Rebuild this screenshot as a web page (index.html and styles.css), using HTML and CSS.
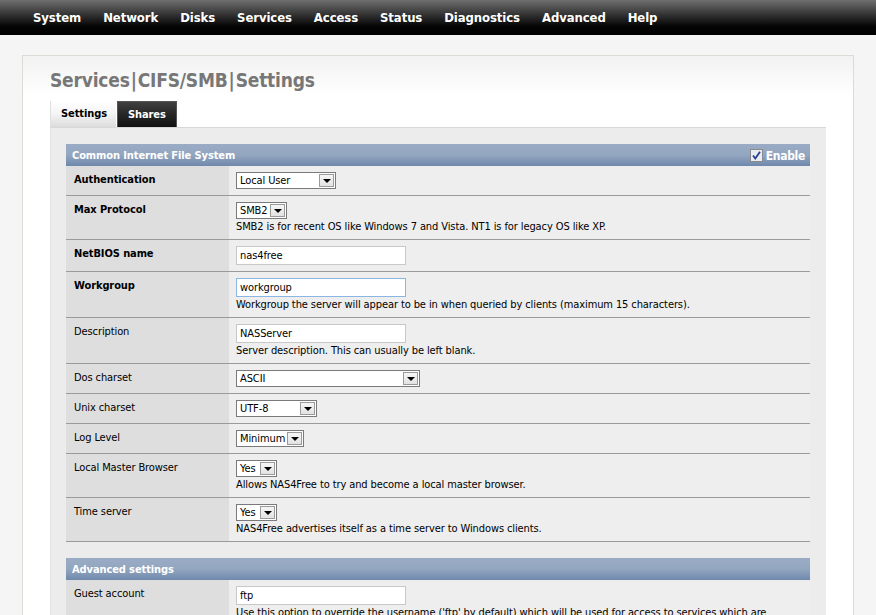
FILE: index.html
```html
<!DOCTYPE html>
<html>
<head>
<meta charset="utf-8">
<link rel="stylesheet" href="styles.css">
</head>
<body>
<div class="nav">
  <a>System</a><a>Network</a><a>Disks</a><a>Services</a><a>Access</a><a>Status</a><a>Diagnostics</a><a>Advanced</a><a>Help</a>
</div>
<div class="page">
  <h1 class="title">Services<span class="sep">|</span>CIFS/SMB<span class="sep">|</span>Settings</h1>
  <div class="tabs">
    <span class="tab active">Settings</span><span class="tab dark">Shares</span>
  </div>
  <div class="panel">
    <table class="form">
      <tr class="head">
        <td colspan="2"><div class="headrow"><span>Common Internet File System</span><span class="enable"><svg width="13" height="13" viewBox="0 0 13 13"><rect x="0.5" y="0.5" width="12" height="12" fill="#e8ecf3" stroke="#8a8a8a"/><path d="M3 6.5 L5.3 9.5 L10 2.8" fill="none" stroke="#2a3f8f" stroke-width="1.8"/></svg>Enable</span></div></td>
      </tr>
      <tr>
        <td class="lbl b">Authentication</td>
        <td class="val"><span class="sel w100"><span class="txt">Local User</span><span class="arr"></span></span></td>
      </tr>
      <tr>
        <td class="lbl b">Max Protocol</td>
        <td class="val"><span class="sel w51"><span class="txt">SMB2</span><span class="arr"></span></span><div class="desc">SMB2 is for recent OS like Windows 7 and Vista. NT1 is for legacy OS like XP.</div></td>
      </tr>
      <tr>
        <td class="lbl b">NetBIOS name</td>
        <td class="val"><span class="inp">nas4free</span></td>
      </tr>
      <tr>
        <td class="lbl b">Workgroup</td>
        <td class="val"><span class="inp focus">workgroup</span><div class="desc">Workgroup the server will appear to be in when queried by clients (maximum 15 characters).</div></td>
      </tr>
      <tr>
        <td class="lbl">Description</td>
        <td class="val"><span class="inp">NASServer</span><div class="desc">Server description. This can usually be left blank.</div></td>
      </tr>
      <tr>
        <td class="lbl">Dos charset</td>
        <td class="val"><span class="sel w184"><span class="txt">ASCII</span><span class="arr"></span></span></td>
      </tr>
      <tr>
        <td class="lbl">Unix charset</td>
        <td class="val"><span class="sel w81"><span class="txt">UTF-8</span><span class="arr"></span></span></td>
      </tr>
      <tr>
        <td class="lbl">Log Level</td>
        <td class="val"><span class="sel w68"><span class="txt">Minimum</span><span class="arr"></span></span></td>
      </tr>
      <tr>
        <td class="lbl">Local Master Browser</td>
        <td class="val"><span class="sel w41"><span class="txt">Yes</span><span class="arr"></span></span><div class="desc">Allows NAS4Free to try and become a local master browser.</div></td>
      </tr>
      <tr>
        <td class="lbl">Time server</td>
        <td class="val"><span class="sel w41"><span class="txt">Yes</span><span class="arr"></span></span><div class="desc">NAS4Free advertises itself as a time server to Windows clients.</div></td>
      </tr>
      <tr class="spacer"><td colspan="2"></td></tr>
      <tr class="head">
        <td colspan="2"><div class="headrow"><span>Advanced settings</span></div></td>
      </tr>
      <tr>
        <td class="lbl">Guest account</td>
        <td class="val"><span class="inp">ftp</span><div class="desc">Use this option to override the username ('ftp' by default) which will be used for access to services which are specified as guest ok or whose users are mapped to guest.</div></td>
      </tr>
    </table>
  </div>
</div>
</body>
</html>
```
FILE: styles.css
```css
html, body {
  margin: 0;
  padding: 0;
}
body {
  background: #f5f5f5;
  font-family: "DejaVu Sans Condensed", "DejaVu Sans", sans-serif;
  font-size: 11px;
  letter-spacing: -0.1px;
  color: #000;
  overflow: hidden;
  height: 615px;
}
.nav {
  height: 35px;
  background: linear-gradient(#6f6f6f 0%, #2e2e2e 45%, #050505 75%, #000 100%);
  display: flex;
  align-items: center;
  padding-left: 22px;
}
.nav a {
  color: #fff;
  font-weight: bold;
  font-size: 13px;
  letter-spacing: -0.1px;
  padding: 0 11px;
  line-height: 35px;
  padding-bottom: 1px;
}
.page {
  margin: 20px 0 0 22px;
  width: 776px;
  padding: 0 27px;
  border: 1px solid #dcdcd6;
  border-bottom: none;
  background: linear-gradient(#f2f2f2 0px, #ffffff 40px);
  height: 600px;
}
.title {
  margin: 0;
  padding-top: 13px;
  font-size: 19px;
  letter-spacing: -0.2px;
  line-height: 22px;
  font-weight: bold;
  color: #777;
  height: 32px;
}
.title .sep {
  padding: 0 1px;
}
.tabs {
  display: flex;
  height: 26px;
  align-items: flex-end;
}
.tab {
  font-weight: bold;
  font-size: 11px;
  height: 26px;
  line-height: 25px;
  box-sizing: border-box;
  padding: 0 10px;
}
.tab.active {
  width: 66px;
  background: linear-gradient(#ffffff 0%, #f4f4f4 50%, #dcdcdc 100%);
  border-left: 1px solid #e0e0e0;
  color: #000;
}
.tab.dark {
  width: 60px;
  margin-left: 1px;
  background: linear-gradient(#404040 0%, #262626 50%, #111 100%);
  border: 1px solid #555;
  border-bottom: none;
  color: #fff;
}
.panel {
  background: #ececec;
  border-top: 1px solid #d8d8d8;
  border-left: 1px solid #e2e2e2;
  padding: 16px 15px 0 15px;
  height: 600px;
}
.form {
  border-collapse: collapse;
  width: 744px;
}
.form td {
  padding: 0;
  vertical-align: top;
}
.head td {
  background: linear-gradient(#9aabc6 0%, #93a6c0 50%, #6f88ab 100%);
  color: #fff;
  font-weight: bold;
  height: 22px;
}
.headrow {
  display: flex;
  justify-content: space-between;
  align-items: center;
  height: 22px;
  padding: 0 5px 0 6px;
}
.enable {
  display: flex;
  align-items: center;
  font-size: 12px;
  letter-spacing: -0.3px;
  padding-top: 2px;
}
.enable svg {
  margin-right: 3px;
  margin-top: -2px;
}
.lbl {
  width: 163px;
  background: #dedede;
  box-sizing: border-box;
  padding: 7px 8px 6px 8px !important;
  border-bottom: 1px solid #9a9a9a;
  line-height: 14px;
}
.lbl.b {
  font-weight: bold;
}
.val {
  background: #eeeeee;
  padding: 6px 7px 5px 7px !important;
  border-bottom: 1px solid #9a9a9a;
  line-height: 14px;
}
.desc {
  line-height: 14px;
}
.sel {
  display: inline-flex;
  align-items: center;
  justify-content: space-between;
  box-sizing: border-box;
  height: 17px;
  border: 1px solid #7a7a7a;
  background: #fff;
  padding: 0 1px 0 3px;
  vertical-align: top;
  margin-bottom: 1px;
}
.sel .txt {
  line-height: 14px;
}
.sel .arr {
  position: relative;
  width: 15px;
  height: 13px;
  box-sizing: border-box;
  border: 1px solid #9a9a9a;
  background: linear-gradient(#f6f6f6, #e2e2e2);
}
.sel .arr::after {
  content: "";
  position: absolute;
  left: 3px;
  top: 4px;
  border-left: 4px solid transparent;
  border-right: 4px solid transparent;
  border-top: 4px solid #000;
}
.w100 { width: 100px; }
.w51 { width: 51px; }
.w184 { width: 184px; }
.w81 { width: 81px; }
.w68 { width: 68px; }
.w41 { width: 41px; }
.inp {
  display: inline-block;
  box-sizing: border-box;
  width: 170px;
  height: 19px;
  border: 1px solid #c8c8c8;
  background: #fff;
  padding: 2px 3px;
  line-height: 14px;
  vertical-align: top;
  margin-bottom: 1px;
}
.inp.focus {
  border-color: #8ab6e3;
}
.spacer td {
  height: 16px;
  background: #ececec;
}
```
